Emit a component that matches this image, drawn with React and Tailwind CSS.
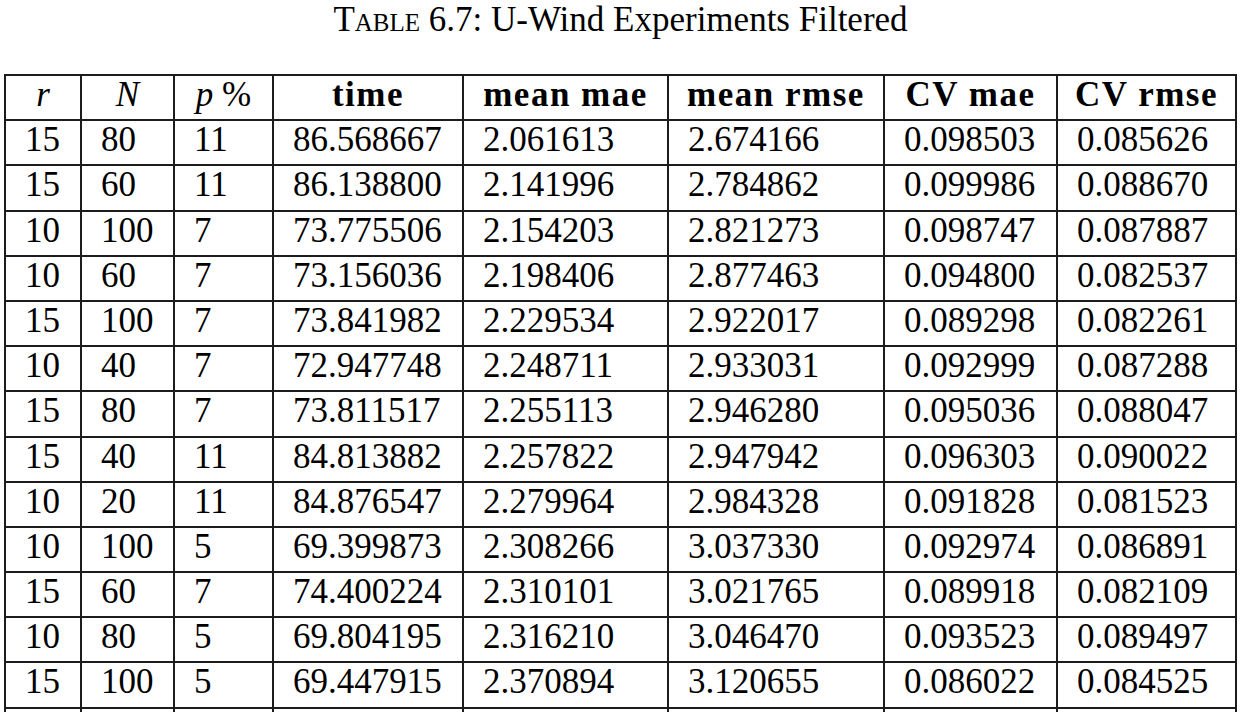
import React from "react";

const rows = [
  ["15", "80", "11", "86.568667", "2.061613", "2.674166", "0.098503", "0.085626"],
  ["15", "60", "11", "86.138800", "2.141996", "2.784862", "0.099986", "0.088670"],
  ["10", "100", "7", "73.775506", "2.154203", "2.821273", "0.098747", "0.087887"],
  ["10", "60", "7", "73.156036", "2.198406", "2.877463", "0.094800", "0.082537"],
  ["15", "100", "7", "73.841982", "2.229534", "2.922017", "0.089298", "0.082261"],
  ["10", "40", "7", "72.947748", "2.248711", "2.933031", "0.092999", "0.087288"],
  ["15", "80", "7", "73.811517", "2.255113", "2.946280", "0.095036", "0.088047"],
  ["15", "40", "11", "84.813882", "2.257822", "2.947942", "0.096303", "0.090022"],
  ["10", "20", "11", "84.876547", "2.279964", "2.984328", "0.091828", "0.081523"],
  ["10", "100", "5", "69.399873", "2.308266", "3.037330", "0.092974", "0.086891"],
  ["15", "60", "7", "74.400224", "2.310101", "3.021765", "0.089918", "0.082109"],
  ["10", "80", "5", "69.804195", "2.316210", "3.046470", "0.093523", "0.089497"],
  ["15", "100", "5", "69.447915", "2.370894", "3.120655", "0.086022", "0.084525"],
  ["", "", "", "", "", "", "", ""],
];

const widths = ["w-[76px]", "w-[93px]", "w-[99px]", "w-[190px]", "w-[205px]", "w-[216px]", "w-[173px]", "w-[179px]"];

export default function App() {
  return (
    <div className="w-[1241px] h-[712px] overflow-hidden bg-white text-black" style={{ fontFamily: '"Liberation Serif", "Times New Roman", serif' }}>
      <div className="h-[74px] pt-0 text-center text-[35px] leading-[40px]">
        <span style={{ fontVariant: "small-caps" }}>Table</span> 6.7: U-Wind Experiments Filtered
      </div>
      <table className="ml-[4px] border-collapse table-fixed text-[35px]">
        <colgroup>
          {widths.map((w, i) => (
            <col key={i} className={w} />
          ))}
        </colgroup>
        <thead>
          <tr className="h-[45.2px]">
            <th className="border-2 border-[#1c1c1c] font-normal italic text-center align-top leading-[37px] pb-[5px]">r</th>
            <th className="border-2 border-[#1c1c1c] font-normal italic text-center align-top leading-[37px] pb-[5px]">N</th>
            <th className="border-2 border-[#1c1c1c] font-normal text-center align-top leading-[37px] pb-[5px]">
              <span className="italic">p</span> %
            </th>
            {["time", "mean mae", "mean rmse", "CV mae", "CV rmse"].map((h) => (
              <th key={h} className="border-2 border-[#1c1c1c] font-bold text-center align-top leading-[37px] pb-[5px] tracking-[1.5px]">
                {h}
              </th>
            ))}
          </tr>
        </thead>
        <tbody>
          {rows.map((r, i) => (
            <tr key={i} className="h-[45.2px]">
              {r.map((c, j) => (
                <td key={j} className="border-2 border-[#1c1c1c] text-left align-top pl-[19px] leading-[37px] pb-[5px] whitespace-nowrap">
                  {c}
                </td>
              ))}
            </tr>
          ))}
        </tbody>
      </table>
    </div>
  );
}
